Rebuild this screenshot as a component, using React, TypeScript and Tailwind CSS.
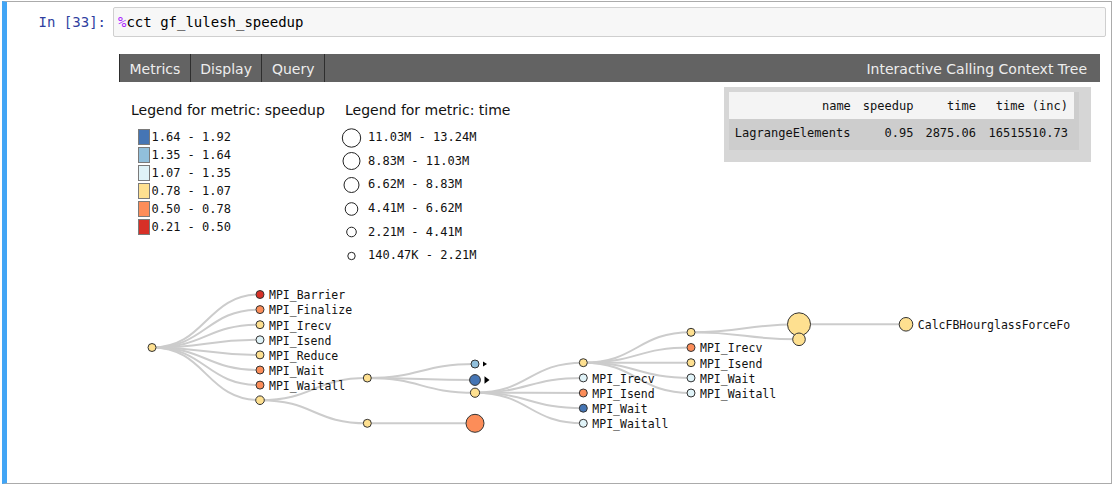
const COLORS = {
  red: "#d73027",
  orange: "#fc8d59",
  yellow: "#fee090",
  light: "#e0f3f8",
  mid: "#91bfdb",
  dark: "#4575b4",
};

const speedupLegend = [
  { color: COLORS.dark, label: "1.64 - 1.92" },
  { color: COLORS.mid, label: "1.35 - 1.64" },
  { color: COLORS.light, label: "1.07 - 1.35" },
  { color: COLORS.yellow, label: "0.78 - 1.07" },
  { color: COLORS.orange, label: "0.50 - 0.78" },
  { color: COLORS.red, label: "0.21 - 0.50" },
];

const timeLegend = [
  { r: 9.2, label: "11.03M - 13.24M" },
  { r: 8.5, label: "8.83M - 11.03M" },
  { r: 7.5, label: "6.62M - 8.83M" },
  { r: 6.3, label: "4.41M - 6.62M" },
  { r: 4.8, label: "2.21M - 4.41M" },
  { r: 3.7, label: "140.47K - 2.21M" },
];

type TreeNode = {
  x: number;
  y: number;
  r: number;
  c: string;
  label?: string;
  parent?: number;
};

// page coordinates, the svg viewBox maps them 1:1
const nodes: TreeNode[] = [
  { x: 152, y: 347.5, r: 4, c: COLORS.yellow }, // 0 root
  { x: 260, y: 294.5, r: 4, c: COLORS.red, label: "MPI_Barrier", parent: 0 },
  { x: 260, y: 309.6, r: 4, c: COLORS.orange, label: "MPI_Finalize", parent: 0 },
  { x: 260, y: 324.7, r: 4, c: COLORS.yellow, label: "MPI_Irecv", parent: 0 },
  { x: 260, y: 339.8, r: 4, c: COLORS.light, label: "MPI_Isend", parent: 0 },
  { x: 260, y: 354.9, r: 4, c: COLORS.yellow, label: "MPI_Reduce", parent: 0 },
  { x: 260, y: 370, r: 4, c: COLORS.orange, label: "MPI_Wait", parent: 0 },
  { x: 260, y: 385.1, r: 4, c: COLORS.orange, label: "MPI_Waitall", parent: 0 },
  { x: 260, y: 400.2, r: 4.3, c: COLORS.yellow, parent: 0 }, // 8
  { x: 367.3, y: 378, r: 4, c: COLORS.yellow, parent: 8 }, // 9
  { x: 367.3, y: 423.3, r: 4, c: COLORS.yellow, parent: 8 }, // 10
  { x: 475, y: 364, r: 4, c: COLORS.mid, parent: 9 }, // 11
  { x: 475, y: 380, r: 5.4, c: COLORS.dark, parent: 9 }, // 12
  { x: 475, y: 392.7, r: 4.6, c: COLORS.yellow, parent: 9 }, // 13
  { x: 475, y: 423.3, r: 9, c: COLORS.orange, parent: 10 }, // 14
  { x: 583.3, y: 362.7, r: 4, c: COLORS.yellow, parent: 13 }, // 15
  { x: 583.3, y: 377.9, r: 4, c: COLORS.light, label: "MPI_Irecv", parent: 13 },
  { x: 583.3, y: 393, r: 4, c: COLORS.orange, label: "MPI_Isend", parent: 13 },
  { x: 583.3, y: 408.2, r: 4, c: COLORS.dark, label: "MPI_Wait", parent: 13 },
  { x: 583.3, y: 423.3, r: 4, c: COLORS.light, label: "MPI_Waitall", parent: 13 },
  { x: 691, y: 332.3, r: 4, c: COLORS.yellow, parent: 15 }, // 20
  { x: 691, y: 347.5, r: 4, c: COLORS.orange, label: "MPI_Irecv", parent: 15 },
  { x: 691, y: 362.7, r: 4, c: COLORS.yellow, label: "MPI_Isend", parent: 15 },
  { x: 691, y: 377.9, r: 4, c: COLORS.light, label: "MPI_Wait", parent: 15 },
  { x: 691, y: 393, r: 4, c: COLORS.light, label: "MPI_Waitall", parent: 15 },
  { x: 799, y: 324.3, r: 11.5, c: COLORS.yellow, parent: 20 }, // 25
  { x: 799, y: 339.3, r: 6.3, c: COLORS.yellow, parent: 20 },
  { x: 906, y: 324.3, r: 6.8, c: COLORS.yellow, label: "CalcFBHourglassForceForElems", parent: 25 },
];

function linkPath(a: TreeNode, b: TreeNode) {
  const mx = (a.x + b.x) / 2;
  return `M${a.x},${a.y}C${mx},${a.y} ${mx},${b.y} ${b.x},${b.y}`;
}

function CallTree() {
  return (
    <svg width={952} height={175} viewBox="119 270 952 175" className="block overflow-hidden">
      <g fill="none" stroke="#cccccc" strokeWidth={2}>
        {nodes.map((n, i) =>
          n.parent === undefined ? null : (
            <path key={i} d={linkPath(nodes[n.parent], n)} />
          )
        )}
      </g>
      {nodes.map((n, i) => (
        <g key={i}>
          <circle cx={n.x} cy={n.y} r={n.r} fill={n.c} stroke="#333333" strokeWidth={1} />
          {n.label && (
            <text
              x={n.x + n.r + 5}
              y={n.y}
              dy="0.42em"
              fontSize={11.5}
              fill="#111111"
              fontFamily="'DejaVu Sans Mono', monospace"
            >
              {n.label}
            </text>
          )}
        </g>
      ))}
      <polygon points="483,361.5 487,364 483,366.5" fill="#000000" />
      <polygon points="484.5,376.3 489.5,380 484.5,383.7" fill="#000000" />
    </svg>
  );
}

function MetricTable() {
  return (
    <div className="mt-[5px] mr-[9px] bg-[#d6d6d6] pt-[5px] pl-[5px] pr-[12px] pb-[12px]">
      <div className="bg-[#cdcdcd] pr-[5px]">
        <table className="border-collapse font-['DejaVu_Sans_Mono',monospace] text-[12px] leading-[15px] text-[#111]">
          <thead>
            <tr className="bg-[#f4f4f4]">
              <th className="w-[128px] px-[6px] pt-[7px] pb-[5px] text-right font-normal">name</th>
              <th className="w-[62px] px-[6px] pt-[7px] pb-[5px] text-right font-normal">speedup</th>
              <th className="w-[62px] px-[6px] pt-[7px] pb-[5px] text-right font-normal">time</th>
              <th className="w-[92px] px-[6px] pt-[7px] pb-[5px] text-right font-normal">time (inc)</th>
            </tr>
          </thead>
          <tbody>
            <tr>
              <td className="px-[6px] pt-[7px] pb-[9px] text-left">LagrangeElements</td>
              <td className="px-[6px] pt-[7px] pb-[9px] text-right">0.95</td>
              <td className="px-[6px] pt-[7px] pb-[9px] text-right">2875.06</td>
              <td className="px-[6px] pt-[7px] pb-[9px] text-right">16515510.73</td>
            </tr>
          </tbody>
        </table>
      </div>
    </div>
  );
}

export default function App() {
  return (
    <div className="h-[487px] w-[1113px] overflow-hidden bg-white pl-[2px] pt-[1px]">
      <div className="flex h-[483px] w-[1110px] flex-col border border-l-[5px] border-[#ababab] border-l-[#42a5f5] pr-[5px] pt-[5px]">
        <div className="flex h-[30px] items-center font-['DejaVu_Sans_Mono',monospace] text-[14px]">
          <div className="w-[106px] pr-[7px] text-right text-[#303f9f]">In [33]:</div>
          <div className="flex h-full flex-1 items-center rounded-[2px] border border-[#cfcfcf] bg-[#f7f7f7] pl-[4px] text-black">
            <span className="text-[#aa22ff]">%</span>cct gf_lulesh_speedup
          </div>
        </div>

        <div className="ml-[112px] mt-[17px] w-[981px] font-['DejaVu_Sans',sans-serif]">
          <div className="flex h-[28px] items-stretch bg-[#636363] text-[14px] text-[#ededed]">
            <div className="flex items-center border-x border-[#2e2e2e] px-[9.5px] pt-[2px]">Metrics</div>
            <div className="flex items-center border-r border-[#2e2e2e] px-[9.5px] pt-[2px]">Display</div>
            <div className="flex items-center border-r border-[#2e2e2e] px-[9.5px] pt-[2px]">Query</div>
            <div className="ml-auto flex items-center pr-[13px] pt-[2px]">Interactive Calling Context Tree</div>
          </div>

          <div className="flex h-[188px] items-start justify-between">
            <div className="flex pl-[12px] pt-[18px] text-[#111]">
              <div className="w-[210px]">
                <div className="text-[14px] leading-[20px]">Legend for metric: speedup</div>
                <div className="mt-[8px] flex flex-col">
                  {speedupLegend.map((item) => (
                    <div key={item.label} className="flex h-[18px] items-center">
                      <div
                        className="ml-[7px] h-[16px] w-[11.5px] border-[1.5px] border-[#7a7a7a]"
                        style={{ backgroundColor: item.color }}
                      />
                      <span className="ml-[2px] font-['DejaVu_Sans_Mono',monospace] text-[12px] leading-[15px]">
                        {item.label}
                      </span>
                    </div>
                  ))}
                </div>
              </div>
              <div>
                <div className="pl-[4px] text-[14px] leading-[20px]">Legend for metric: time</div>
                <div className="mt-[6px] flex flex-col">
                  {timeLegend.map((item) => (
                    <div key={item.label} className="flex h-[23.6px] items-center">
                      <svg width={21} height={22} viewBox="0 0 21 22" className="block">
                        <circle cx={10.5} cy={11} r={item.r} fill="white" stroke="#222" strokeWidth={1} />
                      </svg>
                      <span className="ml-[6px] font-['DejaVu_Sans_Mono',monospace] text-[12px] leading-[15px]">
                        {item.label}
                      </span>
                    </div>
                  ))}
                </div>
              </div>
            </div>
            <MetricTable />
          </div>

          <CallTree />
        </div>
      </div>
    </div>
  );
}
